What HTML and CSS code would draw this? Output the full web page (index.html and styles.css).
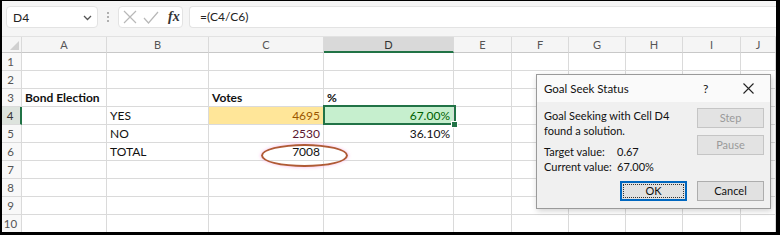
FILE: index.html
```html
<!DOCTYPE html>
<html>
<head>
<meta charset="utf-8">
<link rel="stylesheet" href="styles.css">
</head>
<body>
<div class="frame">
  <div class="fbar">
    <div class="namebox"><span>D4</span>
      <svg class="chev" width="9" height="6" viewBox="0 0 9 6"><path d="M1 1 L4.5 4.5 L8 1" fill="none" stroke="#555" stroke-width="1.3"/></svg>
    </div>
    <div class="vdots"><i></i><i></i><i></i></div>
    <div class="fbtns">
      <svg width="14" height="14" viewBox="0 0 14 14"><path d="M1 1 L13 13 M13 1 L1 13" stroke="#b8b8b8" stroke-width="1.2" fill="none"/></svg>
      <svg width="16" height="13" viewBox="0 0 16 13"><path d="M1 7 L5.5 12 L15 1" stroke="#b8b8b8" stroke-width="1.2" fill="none"/></svg>
      <span class="fx">fx</span>
    </div>
    <div class="formula">=(C4/C6)</div>
  </div>
  <div class="sheet">
    <div class="corner"><span class="tri"></span></div><div class="ch">A</div><div class="ch">B</div><div class="ch">C</div><div class="ch sel">D</div><div class="ch">E</div><div class="ch">F</div><div class="ch">G</div><div class="ch">H</div><div class="ch">I</div><div class="ch">J</div>

    <div class="rh">1</div><div class="c"></div><div class="c"></div><div class="c"></div><div class="c"></div><div class="c"></div><div class="c"></div><div class="c"></div><div class="c"></div><div class="c"></div><div class="c"></div>
    <div class="rh">2</div><div class="c"></div><div class="c"></div><div class="c"></div><div class="c"></div><div class="c"></div><div class="c"></div><div class="c"></div><div class="c"></div><div class="c"></div><div class="c"></div>
    <div class="rh">3</div><div class="c b">Bond Election</div><div class="c"></div><div class="c b">Votes</div><div class="c b">%</div><div class="c"></div><div class="c"></div><div class="c"></div><div class="c"></div><div class="c"></div><div class="c"></div>
    <div class="rh rsel">4</div><div class="c"></div><div class="c">YES</div><div class="c r neutral">4695</div><div class="c r good active">67.00%</div><div class="c"></div><div class="c"></div><div class="c"></div><div class="c"></div><div class="c"></div><div class="c"></div>
    <div class="rh">5</div><div class="c"></div><div class="c">NO</div><div class="c r bad">2530</div><div class="c r">36.10%</div><div class="c"></div><div class="c"></div><div class="c"></div><div class="c"></div><div class="c"></div><div class="c"></div>
    <div class="rh">6</div><div class="c"></div><div class="c">TOTAL</div><div class="c r">7008</div><div class="c"></div><div class="c"></div><div class="c"></div><div class="c"></div><div class="c"></div><div class="c"></div><div class="c"></div>
    <div class="rh">7</div><div class="c"></div><div class="c"></div><div class="c"></div><div class="c"></div><div class="c"></div><div class="c"></div><div class="c"></div><div class="c"></div><div class="c"></div><div class="c"></div>
    <div class="rh">8</div><div class="c"></div><div class="c"></div><div class="c"></div><div class="c"></div><div class="c"></div><div class="c"></div><div class="c"></div><div class="c"></div><div class="c"></div><div class="c"></div>
    <div class="rh">9</div><div class="c"></div><div class="c"></div><div class="c"></div><div class="c"></div><div class="c"></div><div class="c"></div><div class="c"></div><div class="c"></div><div class="c"></div><div class="c"></div>
    <div class="rh">10</div><div class="c"></div><div class="c"></div><div class="c"></div><div class="c"></div><div class="c"></div><div class="c"></div><div class="c"></div><div class="c"></div><div class="c"></div><div class="c"></div>
  </div>

  <div class="oval"></div>

  <div class="dialog">
    <div class="dtitle">
      <span class="dname">Goal Seek Status</span>
      <span class="help">?</span>
      <svg class="close" width="11" height="11" viewBox="0 0 11 11"><path d="M0.5 0.5 L10.5 10.5 M10.5 0.5 L0.5 10.5" stroke="#222" stroke-width="1.1" fill="none"/></svg>
    </div>
    <div class="dbody">
      <div class="dtext">
        <div>Goal Seeking with Cell D4</div>
        <div>found a solution.</div>
        <div class="vals">
          <span>Target value:</span><span>0.67</span>
          <span>Current value:</span><span>67.00%</span>
        </div>
      </div>
      <div class="dbtns">
        <div class="btn dis">Step</div>
        <div class="btn dis">Pause</div>
      </div>
    </div>
    <div class="dfoot">
      <div class="btn ok"><span>OK</span></div>
      <div class="btn">Cancel</div>
    </div>
  </div>
</div>
</body>
</html>
```

FILE: styles.css
```css
html, body { margin: 0; padding: 0; background: #fff; }
.frame {
  position: relative;
  width: 780px;
  height: 235px;
  box-sizing: border-box;
  border-style: solid;
  border-color: #000;
  border-width: 1px 4px 3px 2px;
  overflow: hidden;
  background: #fff;
  font-family: "Lato", "Liberation Sans", sans-serif;
}
.fbar {
  height: 36px;
  box-sizing: border-box;
  padding-top: 5px;
  display: flex;
  align-items: flex-start;
  background: #f5f5f5;
  border-bottom: 1px solid #e2e2e2;
}
.namebox {
  margin-left: 4px;
  width: 92px;
  height: 22px;
  box-sizing: border-box;
  background: #fff;
  border: 1px solid #e3e3e3;
  border-radius: 4px;
  display: flex;
  align-items: center;
  justify-content: space-between;
  padding: 0 5px 0 6px;
  font-size: 12px;
  color: #222;
}
.chev { margin-top: 1px; }
.vdots {
  width: 20px;
  height: 22px;
  display: flex;
  flex-direction: column;
  align-items: center;
  justify-content: center;
  gap: 2px;
}
.vdots i { display: block; width: 2px; height: 2px; background: #999; border-radius: 1px; }
.fbtns {
  width: 65px;
  height: 22px;
  box-sizing: border-box;
  background: #fff;
  border: 1px solid #e3e3e3;
  border-radius: 4px;
  display: flex;
  align-items: center;
  gap: 6px;
  padding-left: 4px;
}
.fx {
  font-family: "Liberation Serif", serif;
  font-style: italic;
  font-weight: bold;
  font-size: 14px;
  color: #333;
  margin-left: 3px;
}
.formula {
  margin-left: 6px;
  flex: 1;
  height: 22px;
  box-sizing: border-box;
  background: #fff;
  border: 1px solid #e3e3e3;
  border-right: none;
  border-radius: 4px 0 0 4px;
  padding-left: 10px;
  font-size: 12px;
  line-height: 20px;
  color: #222;
}
.sheet {
  display: grid;
  grid-template-columns: 20px 85px 102px 115px 130px 58px 57px 57px 57px 58px 1fr;
  grid-template-rows: 16px repeat(10, 18px);
  font-size: 12px;
  color: #111;
}
.corner, .ch, .rh, .c {
  box-sizing: border-box;
  border-right: 1px solid #dadada;
  border-bottom: 1px solid #dadada;
}
.corner { background: #f5f5f5; position: relative; border-bottom-color: #c8c8c8; }
.tri {
  position: absolute;
  right: 2px;
  bottom: 2px;
  width: 0; height: 0;
  border-left: 9px solid transparent;
  border-bottom: 9px solid #d0d0d0;
}
.ch {
  background: #f5f5f5;
  color: #555;
  font-size: 11px;
  text-align: center;
  line-height: 15px;
  border-bottom-color: #c8c8c8;
}
.ch.sel {
  background: #d9d9d9;
  color: #333;
  border-bottom: 2px solid #217346;
}
.rh {
  background: #f8f8f8;
  color: #555;
  font-size: 11.5px;
  text-align: center;
  line-height: 17px;
  padding-right: 2px;
}
.rh.rsel { background: #dde3dd; color: #333; border-right: 2px solid #217346; }
.c {
  line-height: 17px;
  padding: 0 3px;
  white-space: nowrap;
  overflow: visible;
}
.b { font-weight: bold; }
.r { text-align: right; }
.neutral { background: #ffe699; color: #9c5700; }
.good { background: #c6efce; color: #006100; }
.bad { color: #5a1630; }
.active { position: relative; }
.active::after {
  content: "";
  position: absolute;
  left: -1px; top: -2px; right: -3px; bottom: -1px;
  border: 2px solid #217346;
}
.active::before {
  content: "";
  position: absolute;
  right: -5px; bottom: -4px;
  width: 5px; height: 5px;
  background: #217346;
  border: 1px solid #fff;
  z-index: 2;
}
.oval {
  position: absolute;
  left: 259px;
  top: 143px;
  width: 87px;
  height: 23px;
  box-sizing: border-box;
  border: 2px solid #b05a36;
  border-radius: 50%;
  box-shadow: 0 0 3px 1px rgba(250, 170, 230, 0.55);
}
.dialog {
  position: absolute;
  left: 534px;
  top: 73px;
  width: 235px;
  height: 135px;
  box-sizing: border-box;
  background: #f0f0f0;
  border: 1px solid #9a9a9a;
  box-shadow: 1px 2px 6px rgba(0,0,0,0.18);
  font-family: "Lato", "Liberation Sans", sans-serif;
  font-size: 11px;
  color: #111;
}
.dtitle {
  height: 27px;
  background: #fafafa;
  display: flex;
  align-items: center;
  padding-left: 7px;
  position: relative;
}
.dname { font-size: 11.5px; }
.help { position: absolute; left: 166px; top: 6px; font-size: 12px; }
.close { position: absolute; left: 206px; top: 8px; }
.dbody {
  display: flex;
  justify-content: space-between;
  padding: 6px 6px 0 7px;
}
.dtext { line-height: 15px; }
.vals {
  margin-top: 6px;
  display: grid;
  grid-template-columns: 73px auto;
}
.dbtns { display: flex; flex-direction: column; gap: 7px; }
.btn {
  width: 67px;
  height: 20px;
  box-sizing: border-box;
  background: #e1e1e1;
  border: 1px solid #adadad;
  text-align: center;
  line-height: 18px;
  font-size: 11px;
  color: #111;
}
.btn.dis { color: #9a9a9a; border-color: #c5c5c5; background: #e3e3e3; }
.dfoot {
  display: flex;
  justify-content: flex-end;
  gap: 10px;
  padding-right: 6px;
  margin-top: 7px;
}
.btn.ok {
  border: 2px solid #0067c0;
  padding: 1px;
  line-height: 14px;
}
.btn.ok span {
  display: block;
  height: 14px;
  border: 1px dotted #333;
  box-sizing: border-box;
  line-height: 12px;
}
```
